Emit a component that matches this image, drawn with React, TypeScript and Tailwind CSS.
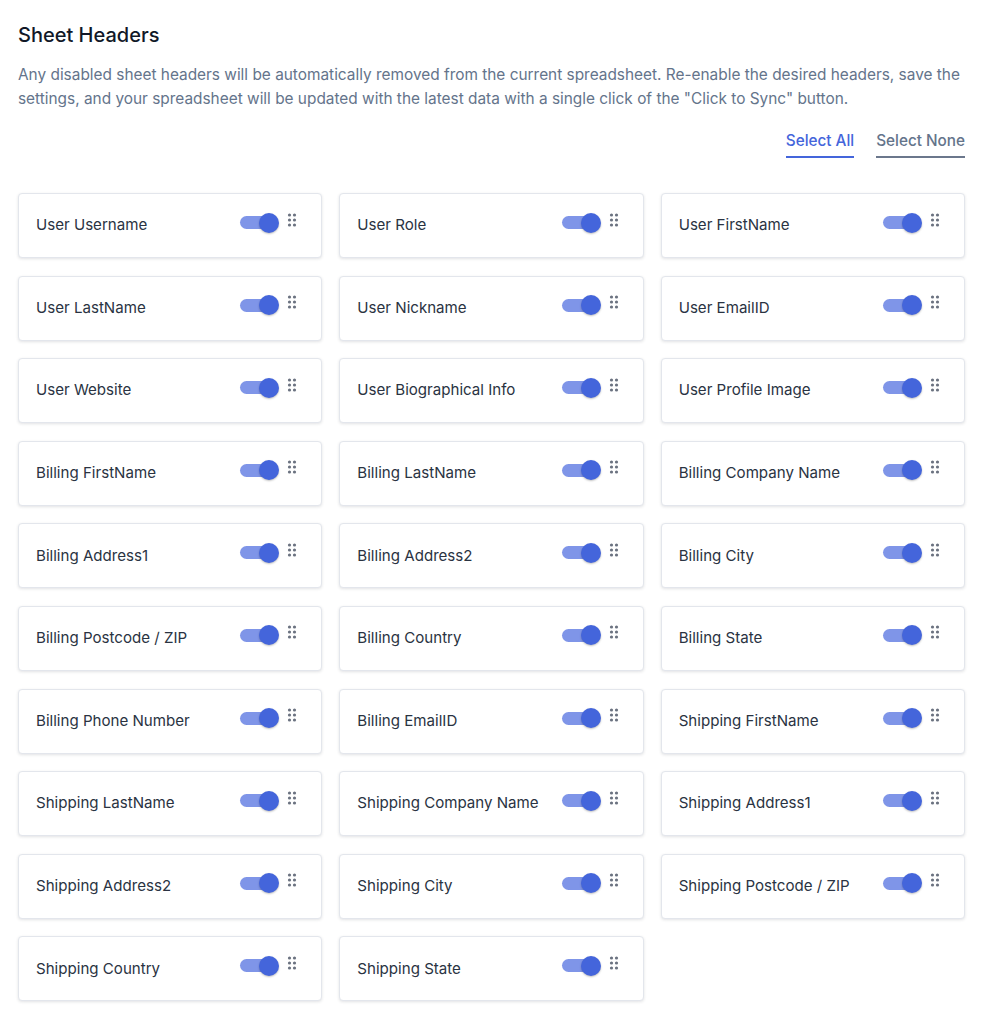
const headers = [
  "User Username",
  "User Role",
  "User FirstName",
  "User LastName",
  "User Nickname",
  "User EmailID",
  "User Website",
  "User Biographical Info",
  "User Profile Image",
  "Billing FirstName",
  "Billing LastName",
  "Billing Company Name",
  "Billing Address1",
  "Billing Address2",
  "Billing City",
  "Billing Postcode / ZIP",
  "Billing Country",
  "Billing State",
  "Billing Phone Number",
  "Billing EmailID",
  "Shipping FirstName",
  "Shipping LastName",
  "Shipping Company Name",
  "Shipping Address1",
  "Shipping Address2",
  "Shipping City",
  "Shipping Postcode / ZIP",
  "Shipping Country",
  "Shipping State",
];

function Toggle() {
  return (
    <div className="relative h-[20px] w-[39px]">
      <div className="absolute left-0 top-[3.5px] h-[13px] w-[35px] rounded-full bg-[#7f95e8]" />
      <div className="absolute right-0 top-0 h-[20px] w-[20px] rounded-full bg-[#4465db] shadow-[0_1px_2px_rgba(0,0,0,0.25)]" />
    </div>
  );
}

function DragDots() {
  return (
    <svg width="10" height="14" viewBox="0 0 10 14" className="text-[#6b7280]">
      {[2, 7, 12].map((y) =>
        [2.5, 7.5].map((x) => <circle key={`${x}-${y}`} cx={x} cy={y} r="1.6" fill="currentColor" />)
      )}
    </svg>
  );
}

function HeaderCard({ label }: { label: string }) {
  return (
    <div className="flex h-[65px] items-center rounded-[4px] border border-[#e3e6ec] bg-white pl-[17px] pr-[24px] shadow-[0_1px_3px_rgba(15,23,42,0.12)]">
      <span className="flex-1 truncate text-[15.1px] text-[#2a3342]">{label}</span>
      <div className="mb-[6px] flex items-start gap-[8px]">
        <Toggle />
        <DragDots />
      </div>
    </div>
  );
}

export default function App() {
  return (
    <div
      className="min-h-screen bg-white pl-[18px] pt-[22px]"
      style={{ fontFamily: "Inter, 'Noto Sans', sans-serif" }}
    >
      <div className="w-[947px]">
        <h2 className="text-[20px] font-medium leading-[27px] text-[#111827]">Sheet Headers</h2>
        <p className="mt-[14px] text-[15.4px] leading-[24px] text-[#64748b]">
          Any disabled sheet headers will be automatically removed from the current spreadsheet. Re-enable the desired
          headers, save the settings, and your spreadsheet will be updated with the latest data with a single click of the
          "Click to Sync" button.
        </p>
        <div className="mt-[20px] flex justify-end gap-[22px]">
          <button className="border-b-2 border-[#4465db] pb-[5px] text-[15.3px] font-medium leading-[20px] text-[#4465db]">
            Select All
          </button>
          <button className="border-b-2 border-[#6b778c] pb-[5px] text-[15.3px] font-medium leading-[20px] text-[#64748b]">
            Select None
          </button>
        </div>
        <div className="mt-[35px] grid grid-cols-3 gap-x-[17px] gap-y-[17.6px]">
          {headers.map((h) => (
            <HeaderCard key={h} label={h} />
          ))}
        </div>
      </div>
    </div>
  );
}
